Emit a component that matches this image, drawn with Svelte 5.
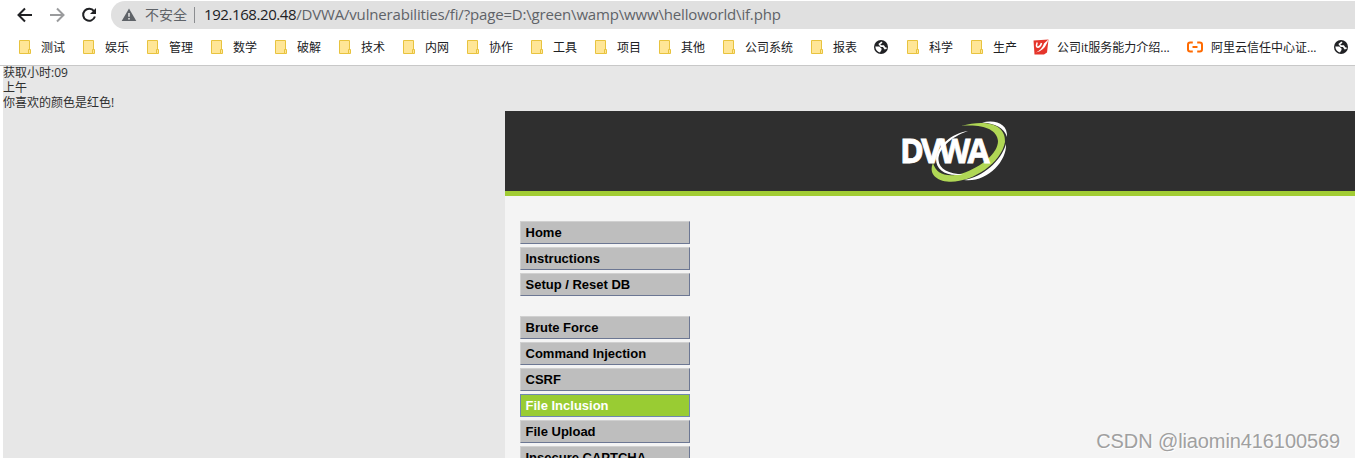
<script>
  const bookmarks = [
    { icon: 'folder', label: '测试', w: 24 },
    { icon: 'folder', label: '娱乐', w: 24 },
    { icon: 'folder', label: '管理', w: 24 },
    { icon: 'folder', label: '数学', w: 24 },
    { icon: 'folder', label: '破解', w: 24 },
    { icon: 'folder', label: '技术', w: 24 },
    { icon: 'folder', label: '内网', w: 24 },
    { icon: 'folder', label: '协作', w: 24 },
    { icon: 'folder', label: '工具', w: 24 },
    { icon: 'folder', label: '项目', w: 24 },
    { icon: 'folder', label: '其他', w: 24 },
    { icon: 'folder', label: '公司系统', w: 48 },
    { icon: 'folder', label: '报表', w: 24 },
    { icon: 'globe' },
    { icon: 'folder', label: '科学', w: 24 },
    { icon: 'folder', label: '生产', w: 24 },
    { icon: 'red', label: '公司it服务能力介绍...', w: 114 },
    { icon: 'cloud', label: '阿里云信任中心证...', w: 106 },
    { icon: 'globe' }
  ];
  const groups = [
    ['Home', 'Instructions', 'Setup / Reset DB'],
    ['Brute Force', 'Command Injection', 'CSRF', 'File Inclusion', 'File Upload', 'Insecure CAPTCHA']
  ];
  const selected = 'File Inclusion';
</script>

<div class="window">
  <div class="toolbar">
    <svg class="nav" viewBox="0 0 16 16"><path d="M15 8H2M8 1.5L1.5 8L8 14.5" /></svg>
    <svg class="nav off" viewBox="0 0 16 16"><path d="M1 8H14M8 1.5L14.5 8L8 14.5" /></svg>
    <svg class="nav" viewBox="0 0 16 16"><path d="M13 4.2A6 6 0 1 0 13.9 9.5" /><path class="solid" d="M15 1V7H9Z" /></svg>
    <div class="omnibox">
      <svg class="warn" viewBox="0 0 16 14"><path d="M8 .5L15.3 13H.7Z" /><path class="mark" d="M8 5V8.7M8 10V11.6" /></svg>
      <span class="unsafe">不安全</span>
      <span class="bar"></span>
      <span class="url"><span class="host">192.168.20.48</span><span class="path">/DVWA/vulnerabilities/fi/?page=D:\green\wamp\www\helloworld\if.php</span></span>
    </div>
  </div>

  <div class="bookmarks">
    {#each bookmarks as b}
      <div class="bookmark">
        <svg class="icon" viewBox="0 0 16 16">
          {#if b.icon === 'folder'}
            <path d="M2.5 1.5H12.5V14.5H2.5Z" fill="#ffe697" stroke="#e8c33e" />
            <path d="M11.5 10.5H13.5V14.5H11.5Z" fill="#ffe697" stroke="#e8c33e" />
          {:else if b.icon === 'globe'}
            <circle cx="8" cy="8" r="7" fill="#202124" />
            <path d="M2.300 7.500H6.300L8.500 9.500V11L7 13.500Q2.800 12.500 2.300 7.500Z" fill="#fff" />
            <path d="M9 3.200L6.500 5.200L8 7.200H10.500L12 9.500L13.600 9" fill="none" stroke="#fff" stroke-width="1.700" />
          {:else if b.icon === 'red'}
            <path d="M.5 1.500L15.500 .5L14 13.500L11 15.500H1.500Z" fill="#e5352b" />
            <path d="M4.200 3.500Q2.500 8.500 5 8.300Q7.500 7.800 8.500 4" fill="none" stroke="#fff" stroke-width="1.500" />
            <path d="M11 4.500L15.700 .2L13.800 4.500Q11 11.500 3 13.500Q9.500 10 11 4.500Z" fill="#fff" />
          {:else}
            <path d="M5.800 3.600H3.2Q1 3.600 1 5.800V10.200Q1 12.400 3.200 12.400H5.800M10.200 3.600H12.800Q15 3.600 15 5.800V10.200Q15 12.400 12.800 12.400H10.200M5.500 8H10.500" fill="none" stroke="#ff6a00" stroke-width="2" />
          {/if}
        </svg>
        {#if b.label}<span class="label" style:width="{b.w}px">{b.label}</span>{/if}
      </div>
    {/each}
  </div>

  <div class="page">
    <div class="output">获取小时:09<br />上午<br />你喜欢的颜色是红色!</div>
    <div class="container">
      <header>
        <svg class="logo" viewBox="0 0 110 66">
          <path d="M82 4.500C96 1 108 6 107 19C104 10 96 5.500 82 4.500Z" fill="#fff" />
          <path d="M106 26C107 44 86 65 64 62C83 59 101 43 106 26Z" fill="#fff" />
          <path d="M61 8C86 1 106 6 105 24C101 46 70 66 47 63.500C34 62 29 54 33 45C36 56 47 60 62 55.500C82 49 98 35 98 23C97 11 82 6 61 8Z" fill="#b0d755" />
          <path d="M68 13C50 19 38 32 38.500 42C39 51 49 56 63 56.500C46 59 36 52 36 41C37 28 52 15 68 13Z" fill="#fff" />
          <text x="0" y="44.500" textLength="87" lengthAdjust="spacingAndGlyphs">DVWA</text>
        </svg>
      </header>
      <nav>
        {#each groups as group}
          <ul>
            {#each group as item}
              <li class:selected={item === selected}>{item}</li>
            {/each}
          </ul>
        {/each}
      </nav>
    </div>
    <div class="watermark">CSDN @liaomin416100569</div>
  </div>
</div>

<style>
  .window {
    width: 1355px;
    height: 458px;
    overflow: hidden;
    background: #fff;
    display: flex;
    flex-direction: column;
    font-family: 'Noto Sans', 'Noto Sans CJK SC', sans-serif;
  }
  .toolbar {
    height: 29px;
    flex: none;
    display: flex;
    align-items: center;
    padding-left: 17px;
    padding-top: 1px;
    box-sizing: border-box;
  }
  .nav {
    width: 16px;
    height: 16px;
    margin-right: 16px;
    fill: none;
    stroke: #202124;
    stroke-width: 2;
    flex: none;
  }
  .nav.off { stroke: #9a9b9d; }
  .nav .solid { fill: #202124; stroke: none; }
  .omnibox {
    height: 28px;
    flex: 1;
    margin-left: -2px;
    display: flex;
    align-items: center;
    background: #e0e0e0;
    border-radius: 14px 0 0 14px;
    padding-left: 10px;
    white-space: nowrap;
  }
  .warn { width: 16px; height: 14px; fill: #5f6368; }
  .warn .mark { stroke: #e0e0e0; stroke-width: 1.6; }
  .unsafe {
    margin-left: 8px;
    width: 43px;
    font: 14px 'Noto Sans CJK SC', sans-serif;
    color: #5f6368;
    padding-bottom: 2px;
  }
  .bar { width: 1px; height: 16px; margin: 0 9px 0 6px; background: #8b8d90; }
  .url { font: 15px 'Open Sans', sans-serif; padding-bottom: 2px; color: #5f6368; }
  .host { color: #202124; letter-spacing: -0.42px; }
  .path { letter-spacing: -0.17px; }
  .bookmarks {
    height: 37px;
    flex: none;
    box-sizing: border-box;
    border-bottom: 1px solid #c8c8c8;
    padding-left: 17px;
    display: flex;
    align-items: center;
    gap: 16px;
  }
  .bookmark { display: flex; align-items: center; gap: 8px; flex: none; }
  .icon { width: 16px; height: 16px; display: block; }
  .label {
    font: 12px/16px 'Open Sans', 'Noto Sans CJK SC', sans-serif;
    padding-top: 2px;
    color: #202124;
    white-space: nowrap;
  }
  .page {
    flex: 1;
    min-height: 0;
    margin-left: 3px;
    background: #e7e7e7;
    position: relative;
    display: flow-root;
  }
  .output {
    height: 46px;
    margin-top: -1px;
    font: 12px/15px 'Open Sans', 'Noto Sans CJK SC', sans-serif;
    color: #2f2f2f;
  }
  .container { margin-left: 502px; height: 347px; background: #f4f4f4; overflow: hidden; }
  header {
    height: 80px;
    background: #2f2f2f;
    border-bottom: 5px solid #a1cc33;
    display: flex;
    align-items: center;
    padding-left: 395px;
  }
  .logo { width: 110px; height: 66px; }
  .logo text {
    font: bold 34px 'Open Sans', sans-serif;
    letter-spacing: -3px;
    fill: #fff;
    stroke: #fff;
    stroke-width: 0.8;
  }
  nav { padding: 25px 0 0 15px; width: 170px; }
  ul { list-style: none; margin: 0 0 20px; padding: 0; display: flex; flex-direction: column; gap: 3px; }
  li {
    box-sizing: border-box;
    height: 23px;
    border: 1px solid;
    border-color: #d0d0d0 #6c7793 #6c7793 #d0d0d0;
    background: #bebebe;
    padding-left: 4.5px;
    font: bold 13px/21px 'Liberation Sans', sans-serif;
    color: #000;
    white-space: nowrap;
  }
  li.selected { background: #9c3; color: #fff; border-color: #6f88b0; }
  .watermark {
    position: absolute;
    right: 15px;
    bottom: 4px;
    font: 20px/26px 'Liberation Sans', sans-serif;
    letter-spacing: -0.1px;
    color: #a0a0a0;
    text-shadow: 1px 1px 0 #fff;
  }
</style>
